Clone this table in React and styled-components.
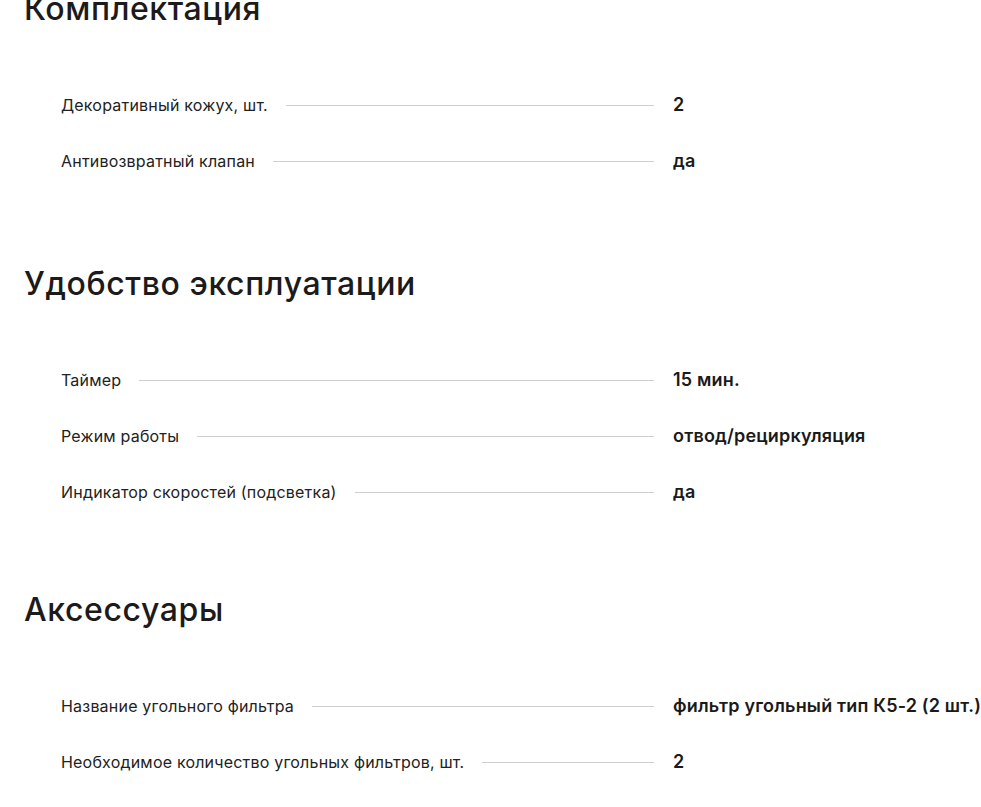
import React from "react";
import styled, { createGlobalStyle } from "styled-components";

const Global = createGlobalStyle`
  html, body { margin: 0; padding: 0; background: #fff; }
  body { font-family: Inter, "Noto Sans", sans-serif; color: #1f1f1f; overflow: hidden; }
`;

const Page = styled.main`
  margin-top: -9px;
  padding: 0 0 0 24px;
`;

const Section = styled.section`
  margin-top: ${(p) => p.$space}px;
`;

const Heading = styled.h2`
  margin: 0;
  font-size: 32px;
  line-height: 36px;
  font-weight: 500;
  color: #1c1a1a;
  letter-spacing: 0.6px;
`;

const List = styled.dl`
  margin: 50px 0 0;
  padding: 0 0 0 37px;
`;

const Row = styled.div`
  display: flex;
  align-items: center;
  height: 56px;
`;

const Label = styled.dt`
  flex: none;
  font-size: 16px;
  line-height: 20px;
  color: #222;
  letter-spacing: 0.2px;
  white-space: nowrap;
`;

const Leader = styled.span`
  flex: 1;
  height: 1px;
  background: #cfcfcf;
  margin: 0 19px 0 18px;
`;

const Value = styled.dd`
  flex: none;
  width: 308px;
  margin: 0;
  font-size: 18px;
  line-height: 22px;
  font-weight: 600;
  color: #1a1a1a;
  letter-spacing: 0.18px;
  white-space: nowrap;
`;

const sections = [
  {
    title: "Комплектация",
    space: 0,
    rows: [
      ["Декоративный кожух, шт.", "2"],
      ["Антивозвратный клапан", "да"],
    ],
  },
  {
    title: "Удобство эксплуатации",
    space: 77,
    rows: [
      ["Таймер", "15 мин."],
      ["Режим работы", "отвод/рециркуляция"],
      ["Индикатор скоростей (подсветка)", "да"],
    ],
  },
  {
    title: "Аксессуары",
    space: 72,
    rows: [
      ["Название угольного фильтра", "фильтр угольный тип К5-2 (2 шт.)"],
      ["Необходимое количество угольных фильтров, шт.", "2"],
    ],
  },
];

export default function App() {
  return (
    <>
      <Global />
      <Page>
        {sections.map((s) => (
          <Section key={s.title} $space={s.space}>
            <Heading>{s.title}</Heading>
            <List>
              {s.rows.map(([l, v]) => (
                <Row key={l}>
                  <Label>{l}</Label>
                  <Leader />
                  <Value>{v}</Value>
                </Row>
              ))}
            </List>
          </Section>
        ))}
      </Page>
    </>
  );
}
